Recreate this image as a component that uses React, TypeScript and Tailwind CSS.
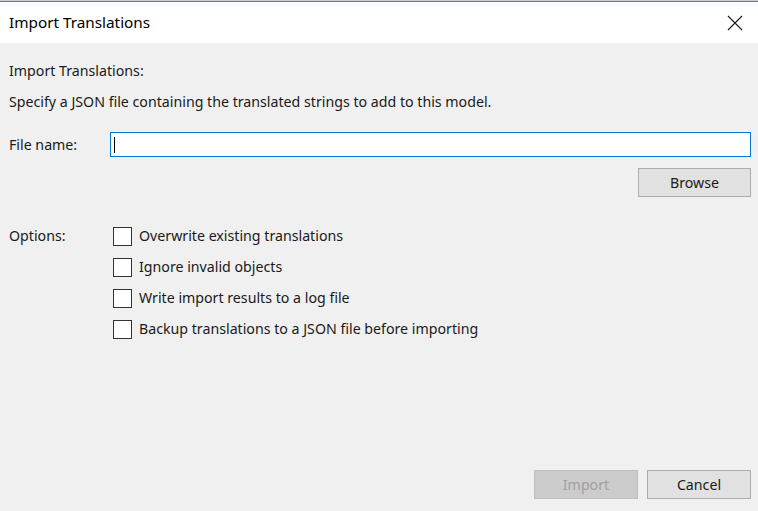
import React from 'react';

const font = { fontFamily: '"Noto Sans", "Open Sans", sans-serif' };

const options = [
  'Overwrite existing translations',
  'Ignore invalid objects',
  'Write import results to a log file',
  'Backup translations to a JSON file before importing',
];

function CloseIcon() {
  return (
    <svg width="16" height="16" viewBox="0 0 16 16" fill="none" stroke="#1a1a1a" strokeWidth="1.1">
      <path d="M1 1L15 15M15 1L1 15" />
    </svg>
  );
}

export default function App() {
  return (
    <div className="flex h-[511px] w-[758px] flex-col overflow-hidden bg-[#f0f0f0] text-[14.2px] text-[#1a1a1a]" style={font}>
      <div className="h-px bg-[#c9ced6]" />
      <div className="h-px bg-[#5b7fae]" />
      <div className="flex h-[41px] items-center justify-between bg-white pl-[9px] pr-[15px]">
        <span className="text-[15.3px] text-black">Import Translations</span>
        <CloseIcon />
      </div>

      <div className="flex flex-1 flex-col pl-[9px] pr-[7px]">
        <div className="mt-[18px] leading-5">Import Translations:</div>
        <div className="mt-[11px] leading-5">Specify a JSON file containing the translated strings to add to this model.</div>

        <div className="mt-[20px] flex items-center">
          <span className="w-[101px] leading-5">File name:</span>
          <div className="flex h-[25px] flex-1 items-center border border-[#0078d7] bg-white pl-[3px]">
            <span className="h-[16px] w-px bg-black" />
          </div>
        </div>

        <div className="mt-[11px] flex justify-end">
          <button className="h-[29px] w-[113px] border border-[#adadad] bg-[#e1e1e1]">Browse</button>
        </div>

        <div className="mt-[29px] flex">
          <span className="w-[104px] leading-5">Options:</span>
          <div className="flex flex-col gap-[11px]">
            {options.map((o) => (
              <label key={o} className="flex items-center gap-[7px] leading-5">
                <span className="h-[19px] w-[19px] border border-[#333] bg-white" />
                {o}
              </label>
            ))}
          </div>
        </div>

        <div className="mt-auto mb-[12px] flex justify-end gap-[9px]">
          <button className="h-[29px] w-[104px] border border-[#bfbfbf] bg-[#cccccc] text-[#a0a0a0]">Import</button>
          <button className="h-[29px] w-[104px] border border-[#adadad] bg-[#e1e1e1]">Cancel</button>
        </div>
      </div>
    </div>
  );
}
